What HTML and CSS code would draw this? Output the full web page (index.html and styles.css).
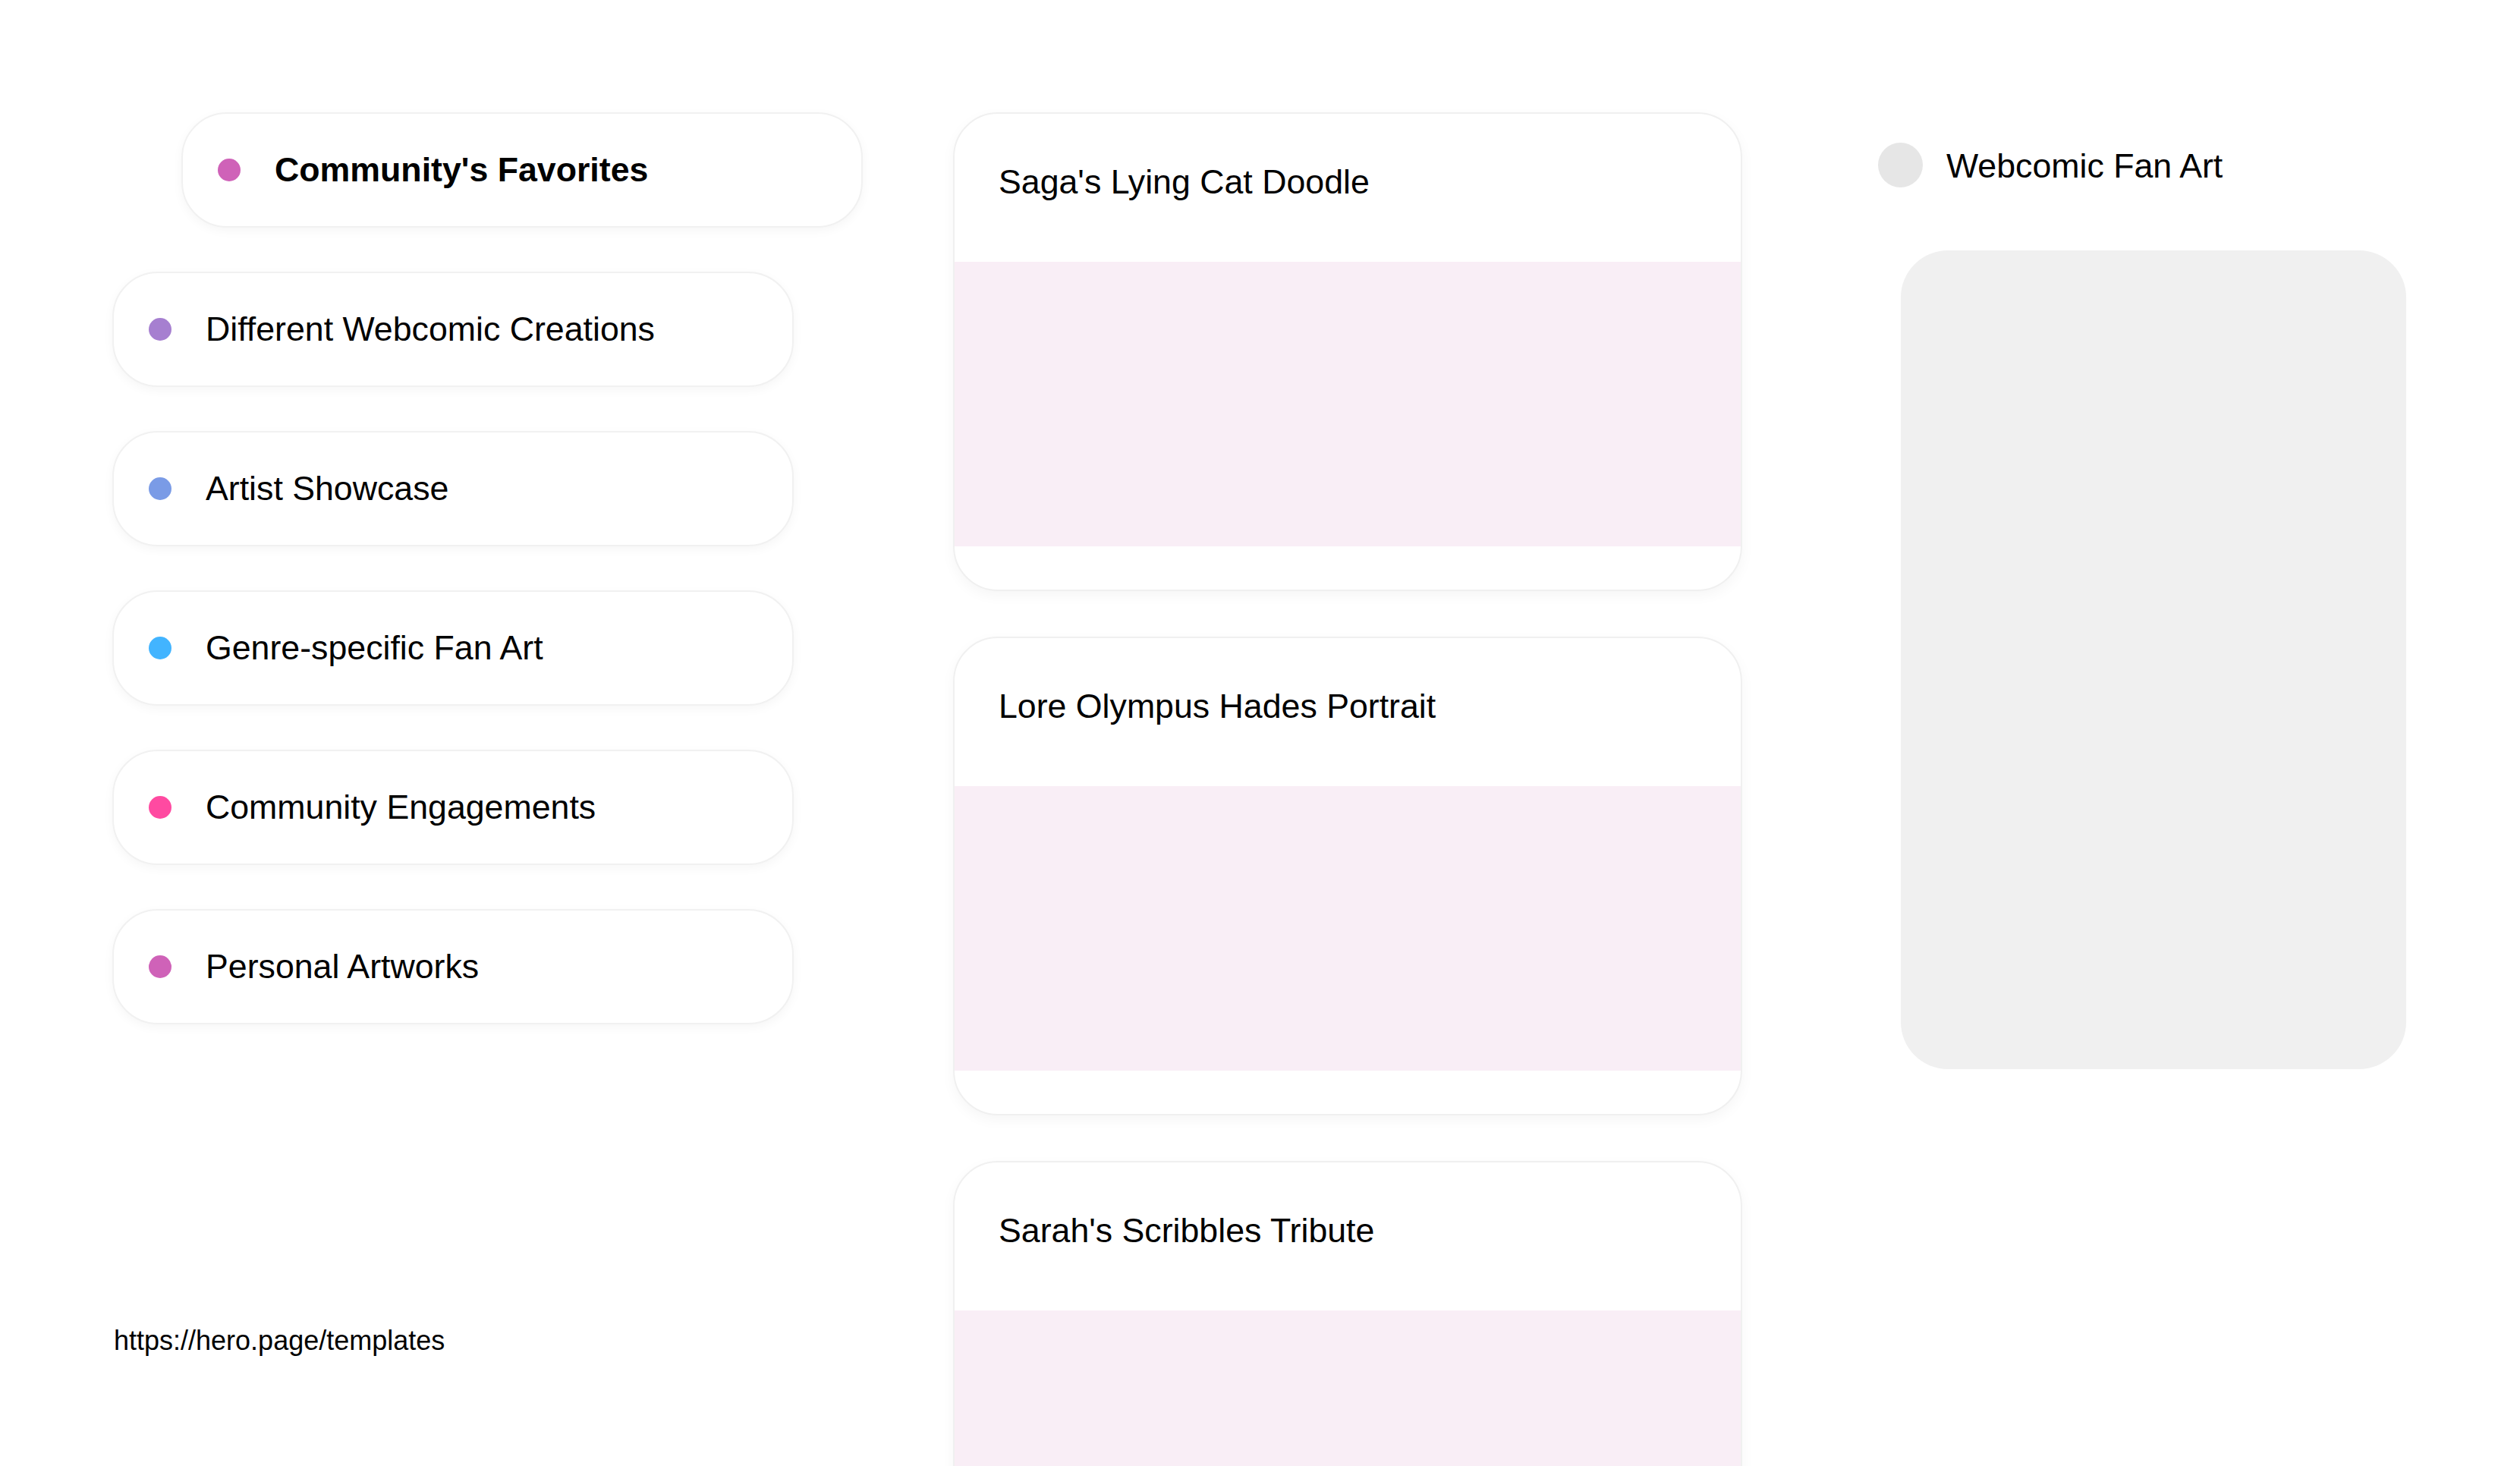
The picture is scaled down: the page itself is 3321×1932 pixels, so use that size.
FILE: index.html
```html
<!DOCTYPE html>
<html lang="en">
<head>
<meta charset="utf-8">
<title>Webcomic Fan Art</title>
<link rel="stylesheet" href="styles.css">
</head>
<body>
<div class="page">
  <aside class="nav">
    <div class="nav-item active"><span class="dot dot-orchid"></span><span class="label">Community's Favorites</span></div>
    <div class="nav-item"><span class="dot dot-lavender"></span><span class="label">Different Webcomic Creations</span></div>
    <div class="nav-item"><span class="dot dot-periwinkle"></span><span class="label">Artist Showcase</span></div>
    <div class="nav-item"><span class="dot dot-sky"></span><span class="label">Genre-specific Fan Art</span></div>
    <div class="nav-item"><span class="dot dot-pink"></span><span class="label">Community Engagements</span></div>
    <div class="nav-item"><span class="dot dot-orchid"></span><span class="label">Personal Artworks</span></div>
    <div class="url">https://hero.page/templates</div>
  </aside>
  <main class="feed">
    <article class="card">
      <h3 class="card-title">Saga's Lying Cat Doodle</h3>
      <div class="card-img"></div>
    </article>
    <article class="card">
      <h3 class="card-title">Lore Olympus Hades Portrait</h3>
      <div class="card-img"></div>
    </article>
    <article class="card">
      <h3 class="card-title">Sarah's Scribbles Tribute</h3>
      <div class="card-img"></div>
    </article>
  </main>
  <section class="side">
    <div class="side-head"><span class="side-dot"></span><span class="side-title">Webcomic Fan Art</span></div>
    <div class="side-box"></div>
  </section>
</div>
</body>
</html>
```

FILE: styles.css
```css
html, body {
  margin: 0;
  padding: 0;
  background: #ffffff;
  height: 100%;
  overflow: hidden;
}
body {
  font-family: "Liberation Sans", Arial, sans-serif;
  color: #000;
}
.page {
  display: flex;
  align-items: flex-start;
  padding: 148px 0 0 148px;
}
.nav {
  width: 898px;
  display: flex;
  flex-direction: column;
  gap: 58px;
  flex-shrink: 0;
}
.nav-item {
  box-sizing: border-box;
  height: 152px;
  display: flex;
  align-items: center;
  padding-left: 46px;
  background: #fff;
  border: 2px solid #f1f1f1;
  border-radius: 60px;
  box-shadow: 0 4px 14px rgba(0, 0, 0, 0.04);
  font-size: 44.7px;
}
.nav-item.active {
  transform: translateX(91px);
  font-weight: bold;
}
.dot {
  width: 30px;
  height: 30px;
  border-radius: 50%;
  flex-shrink: 0;
  margin-right: 45px;
}
.dot-orchid { background: #cf62b8; }
.dot-lavender { background: #a67fd0; }
.dot-periwinkle { background: #7a9be6; }
.dot-sky { background: #42b4ff; }
.dot-pink { background: #ff4aa1; }
.url {
  font-size: 36px;
  margin-top: 338px;
  padding-left: 2px;
}
.feed {
  width: 1040px;
  margin-left: 210px;
  display: flex;
  flex-direction: column;
  gap: 60px;
  flex-shrink: 0;
}
.card {
  box-sizing: border-box;
  height: 631px;
  background: #fff;
  border: 2px solid #f0f0f0;
  border-radius: 59px;
  box-shadow: 0 6px 18px rgba(0, 0, 0, 0.04);
  overflow: hidden;
  padding-bottom: 57px;
}
.card-title {
  margin: 0;
  padding: 58px 59px 73px 58px;
  font-size: 44.7px;
  font-weight: normal;
  line-height: 64px;
}
.card-img {
  height: 375px;
  background: #f9eef6;
}
.side {
  margin-left: 179px;
  margin-top: 40px;
  width: 696px;
  flex-shrink: 0;
}
.side-head {
  display: flex;
  align-items: center;
  gap: 31px;
  height: 59px;
}
.side-dot {
  width: 59px;
  height: 59px;
  border-radius: 50%;
  background: #e6e6e6;
  flex-shrink: 0;
}
.side-title {
  font-size: 44.7px;
  position: relative;
  top: 1px;
}
.side-box {
  margin: 83px 0 0 30px;
  width: 666px;
  height: 1079px;
  background: #f0f0f0;
  border-radius: 62px;
}
```
